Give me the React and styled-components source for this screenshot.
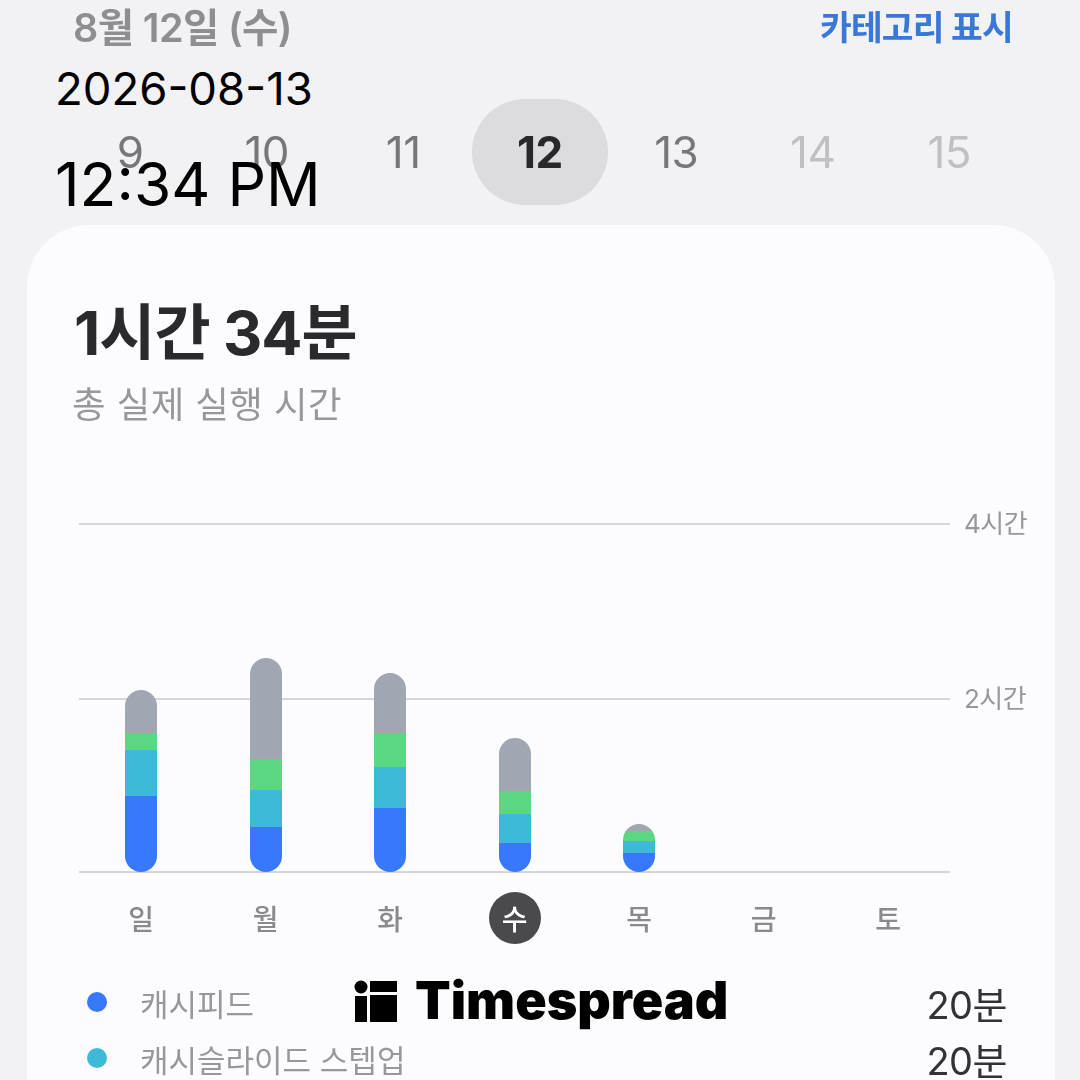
import React from 'react';
import styled, { createGlobalStyle } from 'styled-components';

const GlobalStyle = createGlobalStyle`
	html, body {
		margin: 0;
		padding: 0;
		background: #f2f2f5;
	}
`;

const Frame = styled.div`
	position: relative;
	width: 1080px;
	height: 1080px;
	overflow: hidden;
	background: #f2f2f5;
	font-family: Inter, "Noto Sans CJK KR", sans-serif;
`;

// the source screenshot is an upscaled phone capture, everything under the stamps is soft
const Screen = styled.div`
	display: flex;
	flex-direction: column;
	height: 1080px;
	filter: blur(0.7px);
`;

const Header = styled.div`
	flex: none;
	display: flex;
	justify-content: space-between;
	align-items: center;
	height: 56px;
	padding: 0 67px 0 73px;
`;

const DateTitle = styled.div`
	font-size: 39.5px;
	line-height: 56px;
	font-weight: 600;
	letter-spacing: -0.6px;
	color: #8e8e92;
`;

const CategoryLink = styled.div`
	font-size: 34.5px;
	line-height: 56px;
	font-weight: 700;
	letter-spacing: -0.8px;
	color: #3a78d8;
`;

const DayStrip = styled.div`
	flex: none;
	display: grid;
	grid-template-columns: repeat(7, 136.5px);
	margin: 43px 0 20px 62px;
	height: 106px;
`;

const DayCell = styled.div`
	display: flex;
	align-items: center;
	justify-content: center;
	border-radius: 53px;
	font-size: 44px;
	font-weight: ${props => props.selected ? 700 : 400};
	letter-spacing: -0.5px;
	background: ${props => props.selected ? '#dcdcde' : 'transparent'};
	color: ${props => props.selected ? '#28282a' : props.future ? '#c0c0c4' : '#77777b'};
`;

const Card = styled.div`
	flex: 1;
	margin: 0 25px 0 27px;
	padding: 0 48px 0 47px;
	border-radius: 62px 62px 0 0;
	background: #fcfcfe;
`;

const Total = styled.div`
	margin-top: 70px;
	font-size: 61px;
	line-height: 76px;
	font-weight: 700;
	letter-spacing: -1px;
	color: #2a2a2c;
`;

const TotalCaption = styled.div`
	margin: 11px 0 0 -2px;
	font-size: 36.5px;
	line-height: 46px;
	letter-spacing: 0.4px;
	color: #98989c;
`;

const Chart = styled.div`
	position: relative;
	margin: 95px 0 0 5px;
	height: 350px;
`;

const GridRow = styled.div`
	display: flex;
	align-items: center;
	height: 2px;
	margin-bottom: ${props => props.gap}px;
`;

const GridLine = styled.div`
	flex: none;
	width: 871px;
	height: 2px;
	background: #d6d6d9;
`;

const GridLabel = styled.div`
	flex: none;
	margin: -5px 0 0 14px;
	font-size: 26px;
	letter-spacing: -0.5px;
	white-space: nowrap;
	color: #98989c;
`;

const Bars = styled.div`
	position: absolute;
	left: 0;
	bottom: 1px;
	width: 871px;
	display: grid;
	grid-template-columns: repeat(7, 124.5px);
	align-items: end;
`;

const BarSlot = styled.div`
	display: flex;
	justify-content: center;
`;

const Bar = styled.div`
	display: flex;
	flex-direction: column;
	width: 32px;
	border-radius: 16px;
	overflow: hidden;
`;

const Segment = styled.div`
	background: ${props => props.color};
`;

const WeekRow = styled.div`
	display: grid;
	grid-template-columns: repeat(7, 124.5px);
	margin: 19px 0 0 5px;
`;

const WeekDay = styled.div`
	justify-self: center;
	display: flex;
	align-items: center;
	justify-content: center;
	width: 52px;
	height: 52px;
	border-radius: 50%;
	font-size: 28px;
	font-weight: 500;
	background: ${props => props.today ? '#4a4a4e' : 'transparent'};
	color: ${props => props.today ? '#ffffff' : '#8a8a8e'};
`;

const Legend = styled.div`
	display: flex;
	flex-direction: column;
	margin-top: 30px;
`;

const LegendRow = styled.div`
	display: flex;
	align-items: center;
	height: 56px;
	padding-left: 13px;
`;

const LegendDot = styled.div`
	width: 20px;
	height: 20px;
	border-radius: 50%;
	background: ${props => props.color};
`;

const LegendName = styled.div`
	flex: 1;
	margin-left: 33px;
	font-size: 31px;
	color: #98989c;
`;

const LegendValue = styled.div`
	font-size: 38px;
	letter-spacing: -0.5px;
	color: #333336;
`;

const Stamp = styled.div`
	position: absolute;
	left: 55px;
	top: ${props => props.top}px;
	font-family: Inter, "Liberation Sans", sans-serif;
	font-size: ${props => props.size}px;
	line-height: 1;
	color: #000000;
`;

const Watermark = styled.div`
	position: absolute;
	left: 354px;
	top: 973px;
	display: flex;
	align-items: center;
	gap: 18px;
	font-family: Inter, "Liberation Sans", sans-serif;
	font-size: 52px;
	line-height: 56px;
	font-weight: 900;
	color: #000000;
`;

const BLUE = '#3878fc';
const CYAN = '#3cbad8';
const GREEN = '#5cd884';
const GRAY = '#a0a6b2';

// segment heights in px, top to bottom
const bars = [
	[43, 17, 46, 76],
	[101, 31, 37, 45],
	[60, 34, 41, 64],
	[53, 23, 29, 29],
	[7, 10, 12, 19],
];

const days = [
	{ n: 9 }, { n: 10 }, { n: 11 }, { n: 12, selected: true }, { n: 13 }, { n: 14, future: true }, { n: 15, future: true },
];

const week = ['일', '월', '화', '수', '목', '금', '토'];

export default function App() {
	let colors = [GRAY, GREEN, CYAN, BLUE];

	return (
		<Frame>
			<GlobalStyle />
			<Screen>
				<Header>
					<DateTitle>8월 12일 (수)</DateTitle>
					<CategoryLink>카테고리 표시</CategoryLink>
				</Header>

				<DayStrip>
					{days.map(d => (
						<DayCell key={d.n} selected={d.selected} future={d.future}>{d.n}</DayCell>
					))}
				</DayStrip>

				<Card>
					<Total>1시간 34분</Total>
					<TotalCaption>총 실제 실행 시간</TotalCaption>

					<Chart>
						<GridRow gap={173}><GridLine /><GridLabel>4시간</GridLabel></GridRow>
						<GridRow gap={171}><GridLine /><GridLabel>2시간</GridLabel></GridRow>
						<GridRow gap={0}><GridLine /></GridRow>
						<Bars>
							{bars.map((segments, i) => (
								<BarSlot key={i}>
									<Bar>
										{segments.map((h, j) => (
											<Segment key={j} color={colors[j]} style={{ height: h }} />
										))}
									</Bar>
								</BarSlot>
							))}
						</Bars>
					</Chart>

					<WeekRow>
						{week.map(d => (
							<WeekDay key={d} today={d === '수'}>{d}</WeekDay>
						))}
					</WeekRow>

					<Legend>
						<LegendRow>
							<LegendDot color={BLUE} />
							<LegendName>캐시피드</LegendName>
							<LegendValue>20분</LegendValue>
						</LegendRow>
						<LegendRow>
							<LegendDot color={CYAN} />
							<LegendName>캐시슬라이드 스텝업</LegendName>
							<LegendValue>20분</LegendValue>
						</LegendRow>
					</Legend>
				</Card>
			</Screen>

			<Stamp top={66} size={45.5}>2026-08-13</Stamp>
			<Stamp top={154} size={60.5}>12:34 PM</Stamp>

			<Watermark>
				<svg width="43" height="42" viewBox="0 0 43 42">
					<circle cx="7" cy="7" r="6.5" fill="#000" />
					<rect x="1" y="16" width="12" height="26" fill="#000" />
					<rect x="16" y="1" width="27" height="11" fill="#000" />
					<rect x="16" y="15" width="27" height="27" fill="#000" />
				</svg>
				Timespread
			</Watermark>
		</Frame>
	);
}
